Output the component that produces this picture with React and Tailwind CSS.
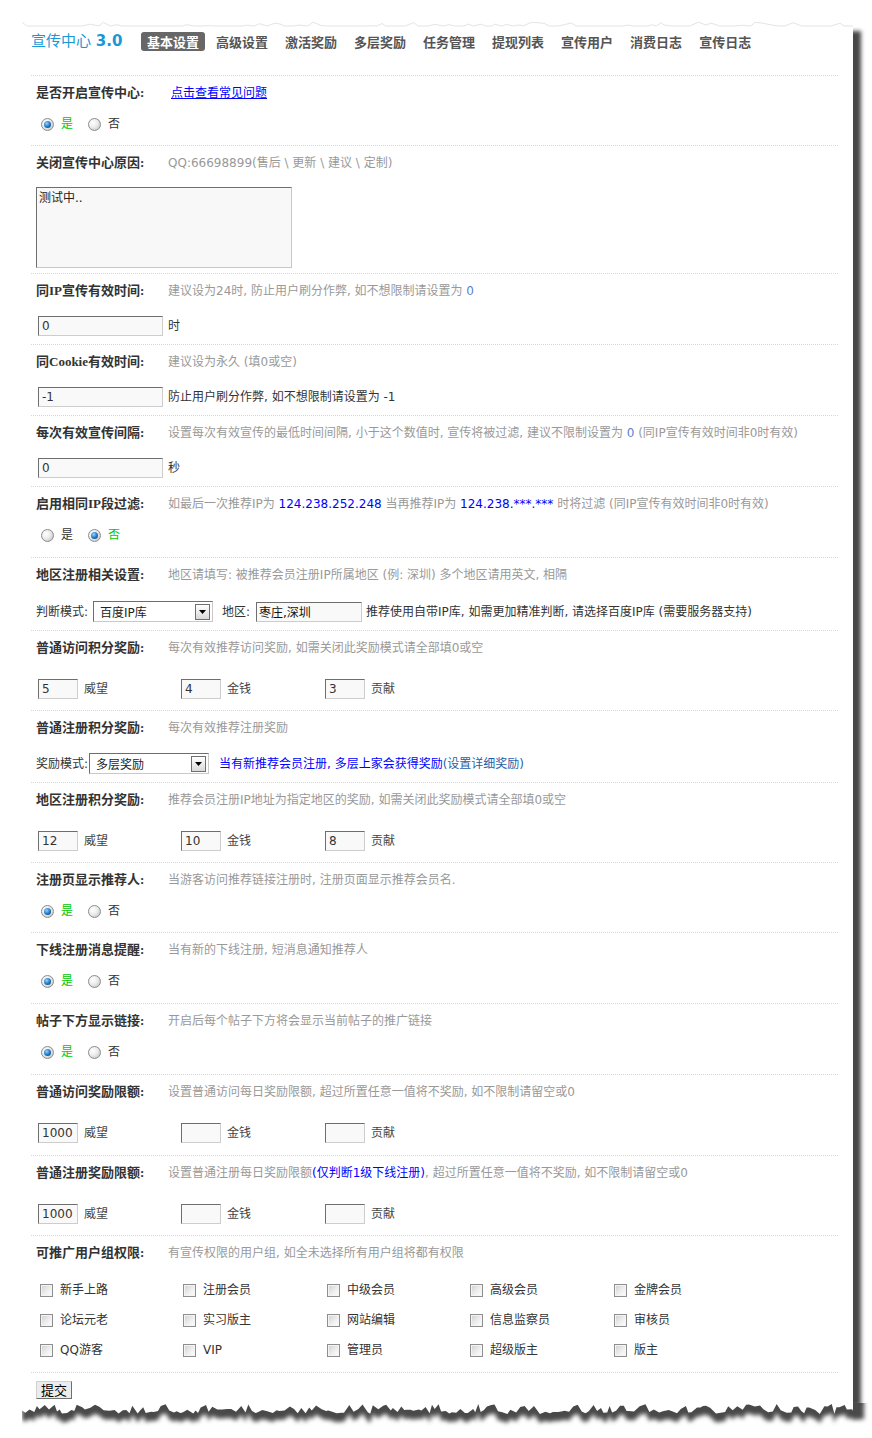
import React from "react";

const LABEL = "w-[132px] shrink-0 font-['Liberation_Serif','Noto_Sans_CJK_SC',serif] font-bold text-[13px] text-[#333] whitespace-nowrap";

function Radio({ checked }) {
  return (
    <span className="flex items-center justify-center w-[13px] h-[13px] shrink-0 rounded-full border border-[#8c8c8c] bg-[radial-gradient(circle_at_35%_35%,#ffffff_0%,#ececec_45%,#b9b9b9_100%)]">
      {checked && (
        <span className="block w-[7px] h-[7px] rounded-full bg-[radial-gradient(circle_at_38%_35%,#8fd4ff_0%,#1d74c2_55%,#0b355f_100%)]" />
      )}
    </span>
  );
}

function Checkbox() {
  return (
    <span className="block w-[13px] h-[13px] shrink-0 border border-[#8e8e8e] bg-[linear-gradient(135deg,#cfcfcf_0%,#eeeeee_55%,#ffffff_100%)] shadow-[inset_0_0_0_1px_#f4f4f4]" />
  );
}

function Field({ w, v }) {
  return (
    <input
      readOnly
      defaultValue={v}
      className={`${w} h-[20px] shrink-0 px-[3px] bg-[#f9f9f9] border border-t-[#6e6e6e] border-l-[#6e6e6e] border-r-[#cdcdcd] border-b-[#cdcdcd] text-[12px] text-[#333] outline-none`}
    />
  );
}

function Select({ v }) {
  return (
    <div className="flex items-center justify-between w-[120px] h-[21px] shrink-0 bg-white border border-t-[#6e6e6e] border-l-[#6e6e6e] border-r-[#c9c9c9] border-b-[#c9c9c9] pl-[6px] pr-[2px]">
      <span className="text-[#222] pt-[2px]">{v}</span>
      <span className="flex items-center justify-center w-[15px] h-[16px] border border-[#6f6f6f] bg-[linear-gradient(#ffffff,#d9d9d9)]">
        <svg width="7" height="4" viewBox="0 0 7 4">
          <path d="M0 0h7L3.5 4z" fill="#000" />
        </svg>
      </span>
    </div>
  );
}

function Sec({ label, desc, pad, children }) {
  return (
    <div className={`border-t border-dotted border-[#cdd8e2] pl-[5px] pt-[7px] ${pad}`}>
      <div className="flex items-center h-[20px]">
        <div className={LABEL}>{label}</div>
        <div className="text-[#999] whitespace-nowrap">{desc}</div>
      </div>
      {children}
    </div>
  );
}

function YesNo({ yes, mt }) {
  return (
    <div className={`flex items-center h-[20px] pl-[5px] ${mt}`}>
      <Radio checked={yes} />
      <span className={yes ? "ml-[7px] text-[#00c800]" : "ml-[7px] text-[#333]"}>是</span>
      <span className="ml-[15px]">
        <Radio checked={!yes} />
      </span>
      <span className={!yes ? "ml-[7px] text-[#00c800]" : "ml-[7px] text-[#333]"}>否</span>
    </div>
  );
}

function Rewards({ a, b, c, mt }) {
  return (
    <div className={`flex items-center h-[20px] pl-[2px] ${mt}`}>
      <div className="flex items-center w-[143px]">
        <Field w="w-[40px]" v={a} />
        <span className="ml-[6px] text-[#444]">威望</span>
      </div>
      <div className="flex items-center w-[144px]">
        <Field w="w-[40px]" v={b} />
        <span className="ml-[6px] text-[#444]">金钱</span>
      </div>
      <div className="flex items-center">
        <Field w="w-[40px]" v={c} />
        <span className="ml-[6px] text-[#444]">贡献</span>
      </div>
    </div>
  );
}

function makeJag() {
  let s = 98765;
  const rnd = () => {
    s = (s * 16807) % 2147483647;
    return s / 2147483647;
  };
  const pts = [];
  let x = 0;
  while (x < 831) {
    const r = rnd();
    pts.push([x, r < 0.35 ? 1 + rnd() * 4 : 6 + rnd() * 5]);
    x += 2 + rnd() * 4;
  }
  pts.push([831, 8]);
  return pts;
}
const JAG = makeJag();

function makeTop() {
  let s = 4242;
  const rnd = () => {
    s = (s * 16807) % 2147483647;
    return s / 2147483647;
  };
  const pts = [];
  let x = 0;
  while (x < 831) {
    pts.push([x, 5 - (rnd() < 0.3 ? rnd() * 4 : 0)]);
    x += 3 + rnd() * 6;
  }
  pts.push([831, 5]);
  return pts;
}
const TOP = makeTop();

function BottomEdge() {
  const white = "0,0 831,0 " + JAG.slice().reverse().map((p) => `${p[0].toFixed(1)},${p[1].toFixed(1)}`).join(" ");
  const dark =
    "0,-10 842,-10 842,16 " +
    JAG.slice().reverse().map((p) => `${p[0].toFixed(1)},${(p[1] + 9).toFixed(1)}`).join(" ");
  return (
    <svg className="absolute left-0 top-full" width="852" height="36" viewBox="0 0 852 36">
      <defs>
        <filter id="bl" x="-5%" y="-50%" width="110%" height="200%">
          <feGaussianBlur stdDeviation="2.2" />
        </filter>
      </defs>
      <polygon points={dark} fill="#4a4a4a" filter="url(#bl)" />
      <polygon points={white} fill="#ffffff" />
    </svg>
  );
}

function TopEdge() {
  const line = TOP.map((p) => `${p[0].toFixed(1)},${p[1].toFixed(1)}`).join(" ");
  return (
    <svg className="absolute left-0 -top-[5px]" width="831" height="8" viewBox="0 0 831 8">
      <polyline points={line} fill="none" stroke="#e4e4e4" strokeWidth="1" />
    </svg>
  );
}

const TABS = ["基本设置", "高级设置", "激活奖励", "多层奖励", "任务管理", "提现列表", "宣传用户", "消费日志", "宣传日志"];

const GROUPS = [
  "新手上路", "注册会员", "中级会员", "高级会员", "金牌会员",
  "论坛元老", "实习版主", "网站编辑", "信息监察员", "审核员",
  "QQ游客", "VIP", "管理员", "超级版主", "版主",
];

export default function App() {
  return (
    <div className="w-[872px] min-h-[1438px] bg-white pt-[26px] pl-[22px] font-['DejaVu_Sans','Noto_Sans_CJK_SC',sans-serif] text-[12px] text-[#333]">
      <div className="relative w-[831px] bg-white pl-[9px] pr-[15px] shadow-[9px_4px_4px_-1px_rgba(0,0,0,0.72)]">
        <TopEdge />

        {/* header */}
        <div className="flex items-center pt-[6px] pb-[24px]">
          <div className="w-[110px] text-[15px] leading-[19px] text-[#1a98d5] whitespace-nowrap">
            宣传中心 <span className="font-bold">3.0</span>
          </div>
          <div className="flex gap-[5px]">
            {TABS.map((t, i) => (
              <span
                key={t}
                className={
                  i === 0
                    ? "px-[6px] h-[19px] leading-[19px] rounded-[3px] bg-[#676767] text-white text-[13px] font-bold font-['Noto_Sans_CJK_SC',sans-serif]"
                    : "px-[6px] h-[19px] leading-[19px] text-[#555] text-[13px] font-bold font-['Noto_Sans_CJK_SC',sans-serif]"
                }
              >
                {t}
              </span>
            ))}
          </div>
        </div>

        <Sec
          label="是否开启宣传中心:"
          pad="pb-[11px]"
          desc={<a className="ml-[3px] text-[#0000ff] underline">点击查看常见问题</a>}
        >
          <YesNo yes mt="mt-[11px]" />
        </Sec>

        <Sec label="关闭宣传中心原因:" pad="pb-[5px]" desc={<>QQ:66698899(售后 \ 更新 \ 建议 \ 定制)</>}>
          <textarea
            readOnly
            defaultValue="测试中.."
            className="block mt-[14px] w-[256px] h-[81px] resize-none p-[2px] leading-[16px] bg-[#f8f8f8] border border-t-[#6e6e6e] border-l-[#6e6e6e] border-r-[#c8c8c8] border-b-[#c8c8c8] text-[12px] text-[#222] outline-none"
          />
        </Sec>

        <Sec
          label="同IP宣传有效时间:"
          pad="pb-[8px]"
          desc={
            <>
              建议设为24时, 防止用户刷分作弊, 如不想限制请设置为 <span className="text-[#5b7fd0]">0</span>
            </>
          }
        >
          <div className="flex items-center h-[20px] pl-[2px] mt-[15px]">
            <Field w="w-[125px]" v="0" />
            <span className="ml-[5px]">时</span>
          </div>
        </Sec>

        <Sec label="同Cookie有效时间:" pad="pb-[8px]" desc="建议设为永久 (填0或空)">
          <div className="flex items-center h-[20px] pl-[2px] mt-[15px]">
            <Field w="w-[125px]" v="-1" />
            <span className="ml-[5px]">防止用户刷分作弊, 如不想限制请设置为 -1</span>
          </div>
        </Sec>

        <Sec
          label="每次有效宣传间隔:"
          pad="pb-[8px]"
          desc={
            <>
              设置每次有效宣传的最低时间间隔, 小于这个数值时, 宣传将被过滤, 建议不限制设置为{" "}
              <span className="text-[#5b7fd0]">0</span> (同IP宣传有效时间非0时有效)
            </>
          }
        >
          <div className="flex items-center h-[20px] pl-[2px] mt-[15px]">
            <Field w="w-[125px]" v="0" />
            <span className="ml-[5px]">秒</span>
          </div>
        </Sec>

        <Sec
          label="启用相同IP段过滤:"
          pad="pb-[12px]"
          desc={
            <>
              如最后一次推荐IP为 <span className="text-[#0000ff]">124.238.252.248</span> 当再推荐IP为{" "}
              <span className="text-[#0000ff]">124.238.***.***</span> 时将过滤 (同IP宣传有效时间非0时有效)
            </>
          }
        >
          <YesNo yes={false} mt="mt-[11px]" />
        </Sec>

        <Sec label="地区注册相关设置:" pad="pb-[8px]" desc="地区请填写: 被推荐会员注册IP所属地区 (例: 深圳) 多个地区请用英文, 相隔">
          <div className="flex items-center h-[21px] mt-[16px]">
            <span className="w-[57px] shrink-0">判断模式:</span>
            <Select v="百度IP库" />
            <span className="ml-[9px] w-[34px] shrink-0">地区:</span>
            <input
              readOnly
              defaultValue="枣庄,深圳"
              className="w-[106px] h-[20px] shrink-0 px-[2px] bg-[#f9f9f9] border border-t-[#6e6e6e] border-l-[#6e6e6e] border-r-[#cdcdcd] border-b-[#cdcdcd] text-[12px] text-[#111] outline-none"
            />
            <span className="ml-[4px] whitespace-nowrap">推荐使用自带IP库, 如需更加精准判断, 请选择百度IP库 (需要服务器支持)</span>
          </div>
        </Sec>

        <Sec label="普通访问积分奖励:" pad="pb-[11px]" desc="每次有效推荐访问奖励, 如需关闭此奖励模式请全部填0或空">
          <Rewards a="5" b="4" c="3" mt="mt-[21px]" />
        </Sec>

        <Sec label="普通注册积分奖励:" pad="pb-[8px]" desc="每次有效推荐注册奖励">
          <div className="flex items-center h-[21px] mt-[15px]">
            <span className="w-[53px] shrink-0">奖励模式:</span>
            <Select v="多层奖励" />
            <span className="ml-[10px] whitespace-nowrap text-[#0000ff]">
              当有新推荐会员注册, 多层上家会获得奖励<span className="text-[#1f5fa8]">(设置详细奖励)</span>
            </span>
          </div>
        </Sec>

        <Sec label="地区注册积分奖励:" pad="pb-[11px]" desc="推荐会员注册IP地址为指定地区的奖励, 如需关闭此奖励模式请全部填0或空">
          <Rewards a="12" b="10" c="8" mt="mt-[21px]" />
        </Sec>

        <Sec label="注册页显示推荐人:" pad="pb-[11px]" desc="当游客访问推荐链接注册时, 注册页面显示推荐会员名.">
          <YesNo yes mt="mt-[11px]" />
        </Sec>

        <Sec label="下线注册消息提醒:" pad="pb-[12px]" desc="当有新的下线注册, 短消息通知推荐人">
          <YesNo yes mt="mt-[11px]" />
        </Sec>

        <Sec label="帖子下方显示链接:" pad="pb-[12px]" desc="开启后每个帖子下方将会显示当前帖子的推广链接">
          <YesNo yes mt="mt-[11px]" />
        </Sec>

        <Sec label="普通访问奖励限额:" pad="pb-[12px]" desc="设置普通访问每日奖励限额, 超过所置任意一值将不奖励, 如不限制请留空或0">
          <Rewards a="1000" b="" c="" mt="mt-[21px]" />
        </Sec>

        <Sec
          label="普通注册奖励限额:"
          pad="pb-[11px]"
          desc={
            <>
              设置普通注册每日奖励限额<span className="text-[#0000ff]">(仅判断1级下线注册)</span>, 超过所置任意一值将不奖励, 如不限制请留空或0
            </>
          }
        >
          <Rewards a="1000" b="" c="" mt="mt-[21px]" />
        </Sec>

        <Sec label="可推广用户组权限:" pad="pb-[7px]" desc="有宣传权限的用户组, 如全未选择所有用户组将都有权限">
          <div className="grid grid-cols-[143px_144px_143px_144px_143px] pl-[4px] mt-[12px]">
            {GROUPS.map((g) => (
              <div key={g} className="flex items-center h-[30px]">
                <Checkbox />
                <span className="ml-[7px] text-[#333]">{g}</span>
              </div>
            ))}
          </div>
        </Sec>

        <div className="border-t border-dotted border-[#cdd8e2] pl-[5px] pt-[8px] pb-[4px]">
          <button className="block w-[36px] h-[18px] p-0 bg-[#ececec] border border-t-[#d0d0d0] border-l-[#d0d0d0] border-r-[#6f6f6f] border-b-[#6f6f6f] text-[13px] leading-[16px] text-black font-['Noto_Sans_CJK_SC',sans-serif]">
            提交
          </button>
        </div>

        <BottomEdge />
      </div>
    </div>
  );
}
